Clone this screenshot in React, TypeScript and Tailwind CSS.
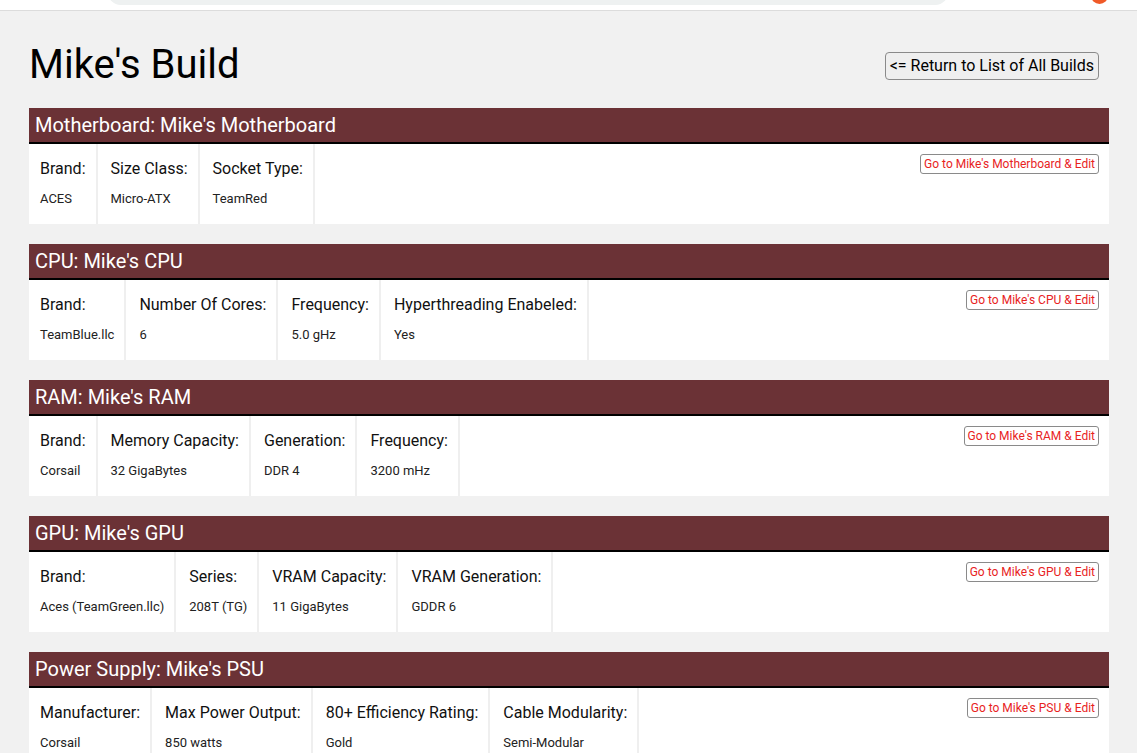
import React from "react";

type Section = {
  title: string;
  edit: string;
  fields: [string, string][];
};

const sections: Section[] = [
  {
    title: "Motherboard: Mike's Motherboard",
    edit: "Go to Mike's Motherboard & Edit",
    fields: [
      ["Brand:", "ACES"],
      ["Size Class:", "Micro-ATX"],
      ["Socket Type:", "TeamRed"],
    ],
  },
  {
    title: "CPU: Mike's CPU",
    edit: "Go to Mike's CPU & Edit",
    fields: [
      ["Brand:", "TeamBlue.llc"],
      ["Number Of Cores:", "6"],
      ["Frequency:", "5.0 gHz"],
      ["Hyperthreading Enabeled:", "Yes"],
    ],
  },
  {
    title: "RAM: Mike's RAM",
    edit: "Go to Mike's RAM & Edit",
    fields: [
      ["Brand:", "Corsail"],
      ["Memory Capacity:", "32 GigaBytes"],
      ["Generation:", "DDR 4"],
      ["Frequency:", "3200 mHz"],
    ],
  },
  {
    title: "GPU: Mike's GPU",
    edit: "Go to Mike's GPU & Edit",
    fields: [
      ["Brand:", "Aces (TeamGreen.llc)"],
      ["Series:", "208T (TG)"],
      ["VRAM Capacity:", "11 GigaBytes"],
      ["VRAM Generation:", "GDDR 6"],
    ],
  },
  {
    title: "Power Supply: Mike's PSU",
    edit: "Go to Mike's PSU & Edit",
    fields: [
      ["Manufacturer:", "Corsail"],
      ["Max Power Output:", "850 watts"],
      ["80+ Efficiency Rating:", "Gold"],
      ["Cable Modularity:", "Semi-Modular"],
    ],
  },
];

export default function App() {
  return (
    <div
      className="min-h-[753px] bg-[#f1f1f1] text-black"
      style={{ fontFamily: "Roboto, 'Liberation Sans', sans-serif" }}
    >
      <div className="relative h-[11px] overflow-hidden border-b border-[#dcdcdc] bg-white">
        <div className="absolute left-[108px] top-[-20px] h-[25px] w-[840px] rounded-full bg-[#eef1f1]"></div>
        <div className="absolute left-[1091px] top-[-13px] h-[17px] w-[17px] rounded-full bg-[#f05a28]"></div>
      </div>
      <div className="pl-[29px] pr-[28px] pt-[30px]">
        <div className="flex items-center justify-between pr-[10px]">
          <h1 className="text-[40px] leading-[48px] font-normal">Mike's Build</h1>
          <button className="mt-[2px] h-[28px] rounded-[4px] border border-[#8a8a8a] bg-[#efefef] px-[4px] text-[16px] leading-[20px] text-black">
            &lt;= Return to List of All Builds
          </button>
        </div>
        <div className="mt-[19px] flex flex-col gap-[20px]">
          {sections.map((s) => (
            <div key={s.title}>
              <div className="h-[36px] border-b-2 border-black bg-[#6b3236] pl-[6px] text-[20px] leading-[34px] text-white">
                {s.title}
              </div>
              <div className="flex h-[80px] bg-white">
                {s.fields.map(([label, value], i) => (
                  <div
                    key={label}
                    className={
                      i === 0
                        ? "border-r-2 border-[#efefef] pl-[11px] pr-[10px] pt-[15px]"
                        : "border-r-2 border-[#efefef] pl-[13px] pr-[10px] pt-[15px]"
                    }
                  >
                    <div className="whitespace-nowrap text-[16px] leading-[20px] text-[#111]">
                      {label}
                    </div>
                    <div className="mt-[12px] whitespace-nowrap text-[13px] leading-[16px] text-[#222]">
                      {value}
                    </div>
                  </div>
                ))}
                <div className="flex-1"></div>
                <button className="m-[10px] h-[20px] self-start rounded-[3px] border border-[#8a8a8a] bg-white px-[3px] text-[12px] leading-[16px] text-[#e8231e]">
                  {s.edit}
                </button>
              </div>
            </div>
          ))}
        </div>
      </div>
    </div>
  );
}
